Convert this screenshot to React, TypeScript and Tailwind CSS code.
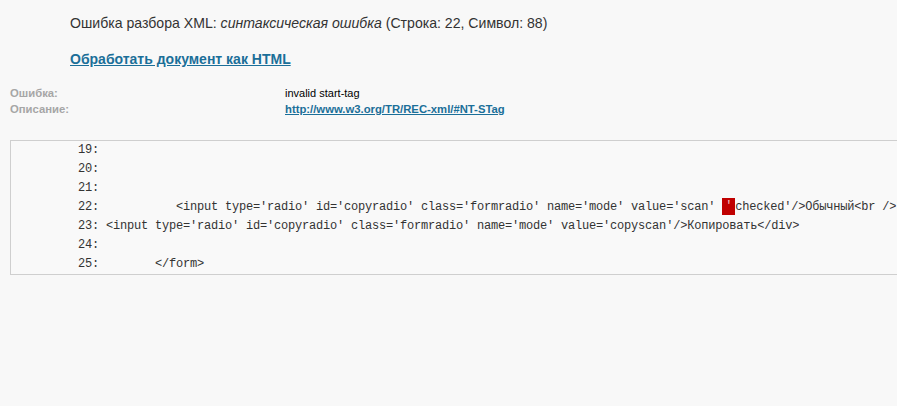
export default function App() {
  const lines: { n: string; text: React.ReactNode }[] = [
    { n: "19:", text: "" },
    { n: "20:", text: "" },
    { n: "21:", text: "" },
    {
      n: "22:",
      text: (
        <>
          {"          <input type='radio' id='copyradio' class='formradio' name='mode' value='scan' "}
          <span className="inline-block bg-[#c00000] px-[3px] align-top leading-[17px] text-[#f4c0c0]">'</span>
          {"checked'/>Обычный<br />"}
        </>
      ),
    },
    { n: "23:", text: "<input type='radio' id='copyradio' class='formradio' name='mode' value='copyscan'/>Копировать</div>" },
    { n: "24:", text: "" },
    { n: "25:", text: "       </form>" },
  ];

  return (
    <div className="h-[406px] w-full overflow-hidden bg-[#f8f8f8] font-['Liberation_Sans',Arial,sans-serif]">
      <div className="pl-[70px] pt-[14px] text-[14.1px] leading-[18px] text-[#333]">
        Ошибка разбора XML: <i>синтаксическая ошибка</i> (Строка: 22, Символ: 88)
      </div>
      <div className="pl-[70px] pt-[15px]">
        <a href="#" className="text-[14px] font-bold leading-[18px] text-[#1b6f99] underline">
          Обработать документ как HTML
        </a>
      </div>
      <div className="mt-[14px] grid grid-cols-[275px_1fr] pl-[10px] text-[11.3px] leading-[16px]">
        <div className="font-bold text-[#a6a6a6]">Ошибка:</div>
        <div className="text-[11px] text-black">invalid start-tag</div>
        <div className="font-bold text-[#a6a6a6]">Описание:</div>
        <div>
          <a href="#" className="font-bold text-[#1b6f99] underline">
            http://www.w3.org/TR/REC-xml/#NT-STag
          </a>
        </div>
      </div>
      <div className="ml-[10px] mt-[23px] w-[900px] border border-[#cfcfcf] bg-[#f9f9f9] pl-[67px] font-['Liberation_Mono',monospace] text-[12px] leading-[19px] tracking-[-0.2px] text-[#333]">
        {lines.map((l) => (
          <div key={l.n} className="h-[19px] whitespace-pre">
            {l.n} {l.text}
          </div>
        ))}
      </div>
    </div>
  );
}
